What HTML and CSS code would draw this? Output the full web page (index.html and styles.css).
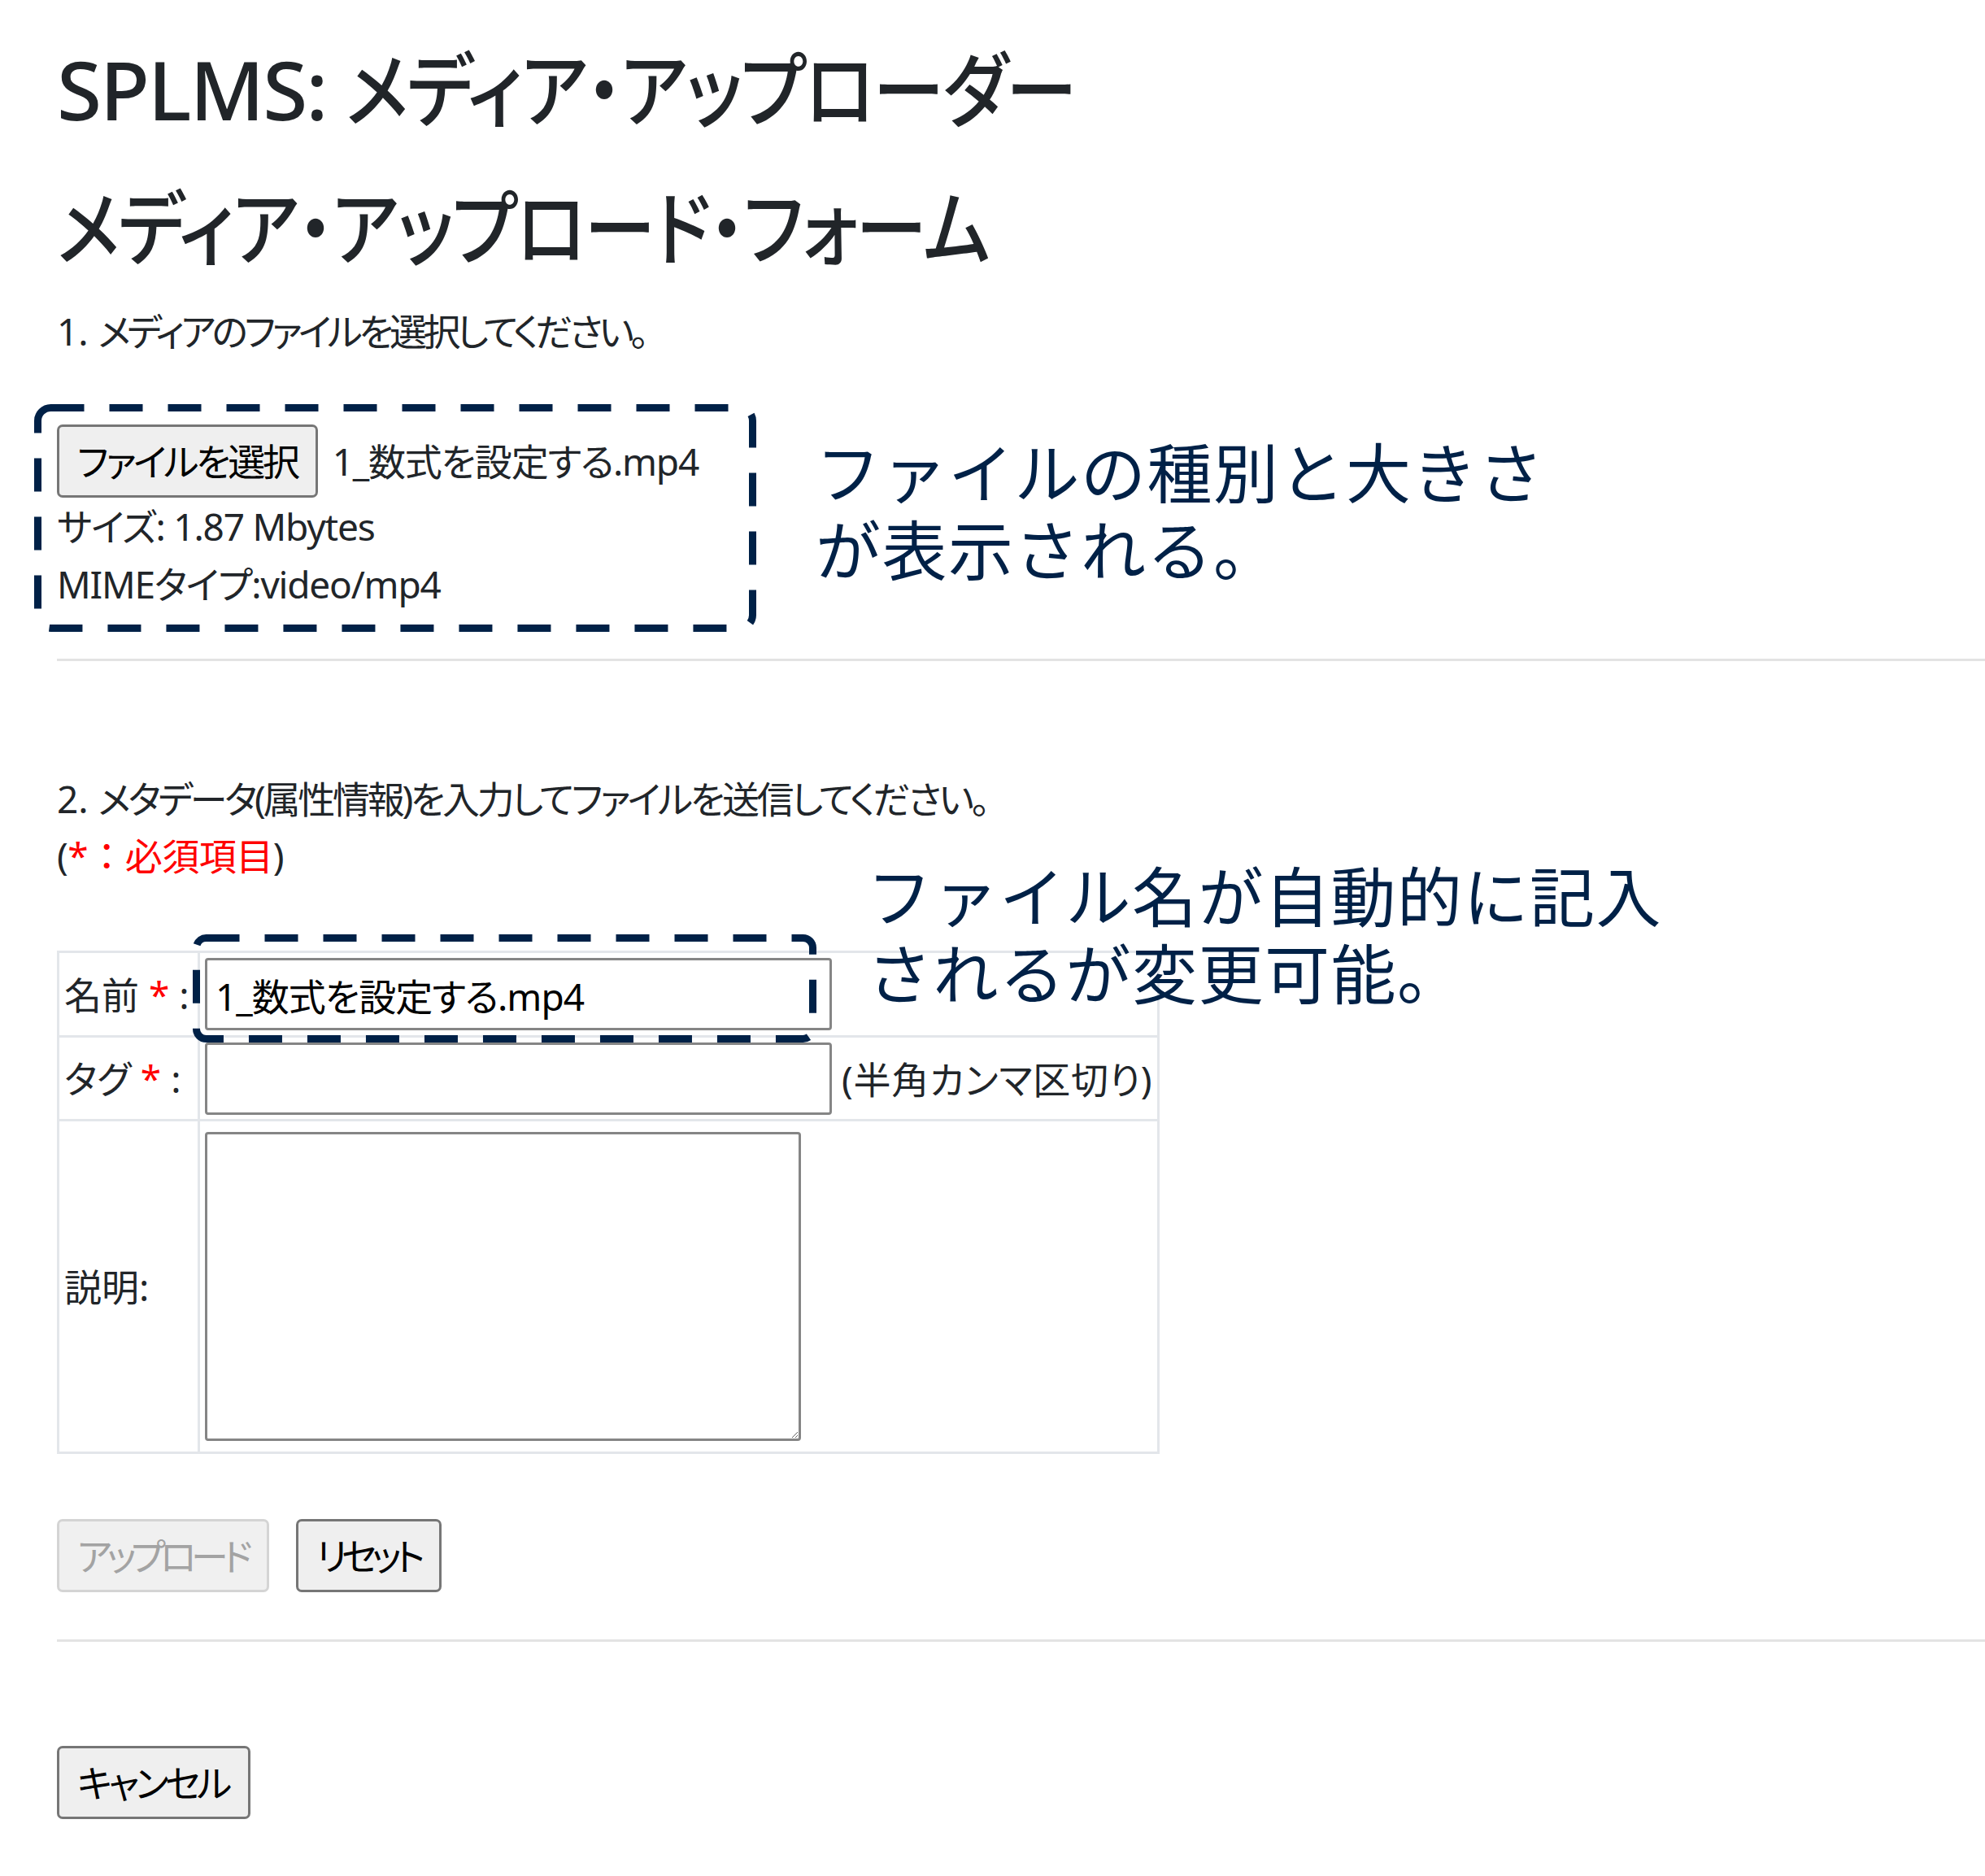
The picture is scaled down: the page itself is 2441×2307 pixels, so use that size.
FILE: index.html
```html
<!DOCTYPE html>
<html lang="ja">
<head>
    <meta charset="UTF-8">
    <title>SPLMS: メディア・アップローダー</title>
    <link rel="stylesheet" href="styles.css">
</head>
<body>

<div class="page">
    <h1 class="title">SPLMS: <span class="narrow">メディア・アップローダー</span></h1>
    <h2 class="title"><span class="narrow">メディア・アップロード・フォーム</span></h2>

    <p class="step"><span class="num">1. </span>メディアのファイルを選択してください。</p>

    <div class="file-block">
        <div class="file-row">
            <button class="button button-file">ファイルを選択</button>
            <span class="file-name">1_数式を設定する.mp4</span>
        </div>
        <div class="file-info">サイズ: 1.87 Mbytes</div>
        <div class="file-info">MIMEタイプ:video/mp4</div>
    </div>

    <hr class="rule">

    <p class="step step-2"><span class="num">2. </span>メタデータ(属性情報)を入力してファイルを送信してください。</p>
    <p class="required">(<span class="red">*：必須項目</span>)</p>

    <table class="meta">
        <tr class="row-name">
            <th>名前 <span class="red">*</span> :</th>
            <td><input type="text" class="field" value="1_数式を設定する.mp4"></td>
        </tr>
        <tr class="row-tag">
            <th>タグ <span class="red">*</span> :</th>
            <td><input type="text" class="field"> <span class="hint">(半角カンマ区切り)</span></td>
        </tr>
        <tr class="row-desc">
            <th>説明:</th>
            <td><textarea class="area"></textarea></td>
        </tr>
    </table>

    <div class="actions">
        <button class="button" disabled>アップロード</button>
        <button class="button">リセット</button>
    </div>

    <hr class="rule rule-2">

    <button class="button cancel">キャンセル</button>

    <!-- annotations drawn over the screenshot -->
    <svg class="mark mark-file" width="888" height="280">
        <rect x="4.5" y="4.5" width="879" height="271" rx="16"></rect>
    </svg>
    <div class="note note-file">ファイルの種別と大きさ<br>が表示される。</div>

    <svg class="mark mark-name" width="767" height="133">
        <rect x="4.5" y="4.5" width="758" height="124" rx="12"></rect>
    </svg>
    <div class="note note-name">ファイル名が自動的に記入<br>されるが変更可能。</div>
</div>

</body>
</html>
```

FILE: styles.css
```css
body {
    margin: 0;
    background: #fff;
    color: #212529;
    font-family: "Segoe UI", "Noto Sans", "Noto Sans CJK JP", sans-serif;
    font-feature-settings: "palt";
    font-size: 46px;
    line-height: 70px;
    letter-spacing: -1.2px;
}
.page {
    position: relative;
    padding: 24px 0 40px 70px;
}
.title {
    margin: 0;
    font-size: 100px;
    font-weight: 500;
    line-height: 170px;
    letter-spacing: -2px;
    white-space: nowrap;
}
/* Meiryo UI style condensed kana */
.narrow {
    display: inline-block;
    transform: scaleX(0.88);
    transform-origin: left center;
}
.step {
    width: fit-content;
    margin: 8px 0 0;
    letter-spacing: -4.6px;
}
.step .num {
    letter-spacing: 0;
}
.step-2 {
    margin-top: 134px;
    letter-spacing: -3.3px;
}
.file-block {
    width: fit-content;
    margin-top: 80px;
}
.file-row {
    display: flex;
    align-items: center;
    gap: 18px;
}
.button {
    font: inherit;
    font-feature-settings: "palt";
    letter-spacing: -6.5px;
    color: #000;
    background: #efefef;
    border: 3px solid #767676;
    border-radius: 7px;
    padding: 0 24px 0 22px;
    height: 90px;
}
.button-file {
    letter-spacing: -3.3px;
    padding: 0 22px;
}
.button:disabled {
    color: #a3a3a3;
    border-color: #d4d4d4;
    background: #f0f0f0;
}
.file-info {
    line-height: 71px;
}
.rule {
    border: 0;
    border-top: 3px solid #e3e3e3;
    margin: 56px 0 0;
}
.required {
    width: fit-content;
    margin: 0;
    letter-spacing: -0.5px;
    font-feature-settings: normal;
}
.red {
    color: #ff0000;
}
.meta {
    margin-top: 82px;
    border-collapse: collapse;
    border: 3px solid #e3e6ea;
}
.meta th, .meta td {
    border: 3px solid #e3e6ea;
    padding: 4px 6px;
    font-weight: normal;
    text-align: left;
    white-space: nowrap;
    letter-spacing: 0;
}
.meta th {
    width: 158px;
}
.row-name {
    height: 104px;
}
.row-tag {
    height: 103px;
}
.row-desc {
    height: 409px;
}
.field {
    font: inherit;
    font-feature-settings: "palt";
    letter-spacing: -1px;
    width: 771px;
    height: 89px;
    box-sizing: border-box;
    border: 3px solid #858585;
    border-radius: 4px;
    padding: 0 10px;
    vertical-align: middle;
}
.hint {
    vertical-align: middle;
    letter-spacing: 0.8px;
}
.area {
    width: 733px;
    height: 380px;
    box-sizing: border-box;
    border: 3px solid #858585;
    border-radius: 4px;
    vertical-align: middle;
}
.actions {
    display: flex;
    gap: 33px;
    margin-top: 80px;
}
.rule-2 {
    margin-top: 58px;
}
.cancel {
    margin-top: 128px;
    letter-spacing: -4.5px;
}
.mark {
    position: absolute;
    fill: none;
    stroke: #002147;
    stroke-width: 9;
    stroke-dasharray: 41 31;
}
.mark-file {
    left: 42px;
    top: 497px;
}
.mark-name {
    left: 237px;
    top: 1149px;
}
.note {
    position: absolute;
    color: #002147;
    font-family: "Noto Sans CJK JP", sans-serif;
    font-feature-settings: normal;
    font-size: 80px;
    line-height: 95px;
    letter-spacing: 1.5px;
    white-space: nowrap;
}
.note-file {
    left: 1003px;
    top: 530px;
}
.note-name {
    left: 1066px;
    top: 1051px;
}
```
